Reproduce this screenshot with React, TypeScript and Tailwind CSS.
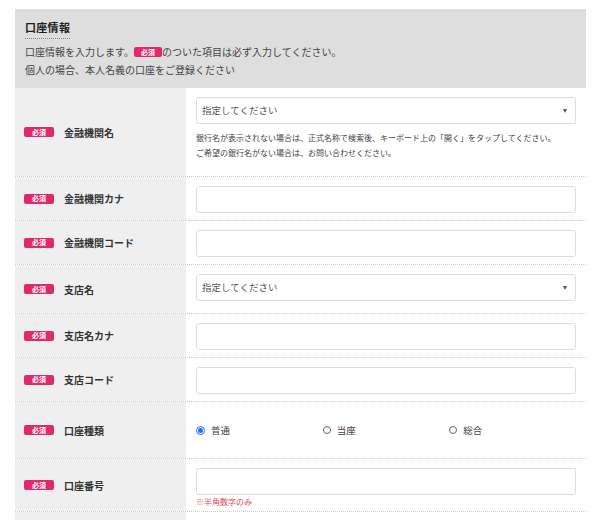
import React from 'react'

const font = { fontFamily: '"Noto Sans CJK JP", "Noto Sans", sans-serif' }

const Badge = ({ small }: { small?: boolean }) => (
  <span
    className={
      'inline-flex items-center justify-center rounded-[2px] bg-[#de2a6c] text-white font-bold leading-none text-[7px] ' +
      (small ? 'w-[28px] h-[10px]' : 'w-[30px] h-[10px]')
    }
  >
    必須
  </span>
)

const TextBox = () => (
  <div className="h-[27px] w-full rounded-[3px] border border-[#dcdcdc] bg-white" />
)

const SelectBox = () => (
  <div className="flex h-[27px] w-full items-center justify-between rounded-[3px] border border-[#dcdcdc] bg-white pl-[5px] pr-[8px]">
    <span className="text-[9.5px] text-[#555]">指定してください</span>
    <span className="h-0 w-0 border-l-[2.5px] border-r-[2.5px] border-t-[4px] border-l-transparent border-r-transparent border-t-[#555]" />
  </div>
)

const Radio = ({ checked, label }: { checked?: boolean; label: string }) => (
  <div className="flex items-center gap-[6px]">
    {checked ? (
      <span className="flex h-[9px] w-[9px] items-center justify-center rounded-full border border-[#1a73e8] bg-white">
        <span className="h-[5px] w-[5px] rounded-full bg-[#1a73e8]" />
      </span>
    ) : (
      <span className="h-[8px] w-[8px] rounded-full border border-[#666] bg-white" />
    )}
    <span className="text-[9.5px] text-[#444]">{label}</span>
  </div>
)

const Row = ({
  label,
  h,
  align = 'top',
  children,
}: {
  label: string
  h: string
  align?: 'top' | 'center'
  children?: React.ReactNode
}) => (
  <div className={'flex border-b border-dotted border-[#cccccc] ' + h}>
    <div className="flex w-[171px] shrink-0 items-center gap-[10px] bg-[#efefef] pl-[9px]">
      <Badge />
      <span className="text-[10px] font-bold text-[#333]">{label}</span>
    </div>
    <div
      className={
        'flex flex-1 flex-col px-[10px] ' + (align === 'center' ? 'justify-center' : 'pt-[9px]')
      }
    >
      {children}
    </div>
  </div>
)

export default function App() {
  return (
    <div className="h-[520px] overflow-hidden bg-white pt-[9px]" style={font}>
      <div className="ml-[15px] w-[571px]">
        {/* header */}
        <div className="h-[79px] bg-[#dedede] pl-[10px] pt-[10px]">
          <div className="w-fit border-b border-dotted border-[#888] pb-[3px] text-[11px] font-bold leading-[16px] tracking-[0.3px] text-[#222]">
            口座情報
          </div>
          <div className="mt-[4px] flex items-center text-[10px] leading-[18px] text-[#444]">
            <span>口座情報を入力します。</span>
            <Badge small />
            <span>のついた項目は必ず入力してください。</span>
          </div>
          <div className="text-[10px] leading-[18px] text-[#444]">個人の場合、本人名義の口座をご登録ください</div>
        </div>

        <Row label="金融機関名" h="h-[89px]">
          <SelectBox />
          <div className="mt-[6px] text-[8px] leading-[15px] text-[#444]">
            <div>銀行名が表示されない場合は、正式名称で検索後、キーボード上の「開く」をタップしてください。</div>
            <div>ご希望の銀行名がない場合は、お問い合わせください。</div>
          </div>
        </Row>
        <Row label="金融機関カナ" h="h-[44px]">
          <TextBox />
        </Row>
        <Row label="金融機関コード" h="h-[44px]">
          <TextBox />
        </Row>
        <Row label="支店名" h="h-[49px]">
          <SelectBox />
        </Row>
        <Row label="支店名カナ" h="h-[44px]">
          <TextBox />
        </Row>
        <Row label="支店コード" h="h-[44px]">
          <TextBox />
        </Row>
        <Row label="口座種類" h="h-[57px]" align="center">
          <div className="grid grid-cols-3">
            <Radio checked label="普通" />
            <Radio label="当座" />
            <Radio label="総合" />
          </div>
        </Row>
        <Row label="口座番号" h="h-[53px]">
          <TextBox />
          <div className="mt-[1px] text-[8px] leading-[12px] text-[#e8484f]">※半角数字のみ</div>
        </Row>
        {/* next row, only its top edge is in view */}
        <div className="flex h-[20px]">
          <div className="w-[171px] shrink-0 bg-[#efefef]" />
          <div className="flex-1" />
        </div>
      </div>
    </div>
  )
}
